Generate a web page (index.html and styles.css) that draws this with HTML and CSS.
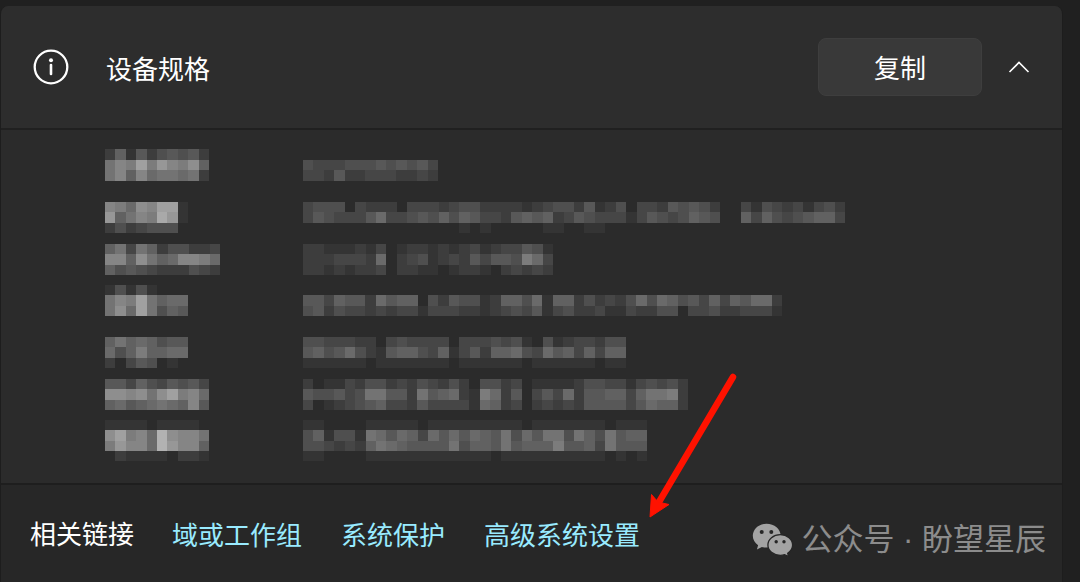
FILE: index.html
```
<!DOCTYPE html>
<html lang="zh-CN">
  <head>
    <meta charset="UTF-8" />
    <meta name="viewport" content="width=device-width, initial-scale=1.0" />
    <title>设备规格</title>
    <link rel="stylesheet" href="styles.css">
  </head>
  <body>
    <main class="card">
      <header class="card-header">
        <svg class="info-icon" viewBox="0 0 36 36" aria-hidden="true">
          <circle cx="18" cy="18" r="16.3" fill="none" stroke="#fff" stroke-width="2.3" />
          <circle cx="18" cy="11.2" r="2" fill="#fff" />
          <path d="M18 16v9" stroke="#fff" stroke-width="2.6" stroke-linecap="round" />
        </svg>
        <h1 class="card-title">设备规格</h1>
        <button class="copy-button" type="button">复制</button>
        <button class="toggle-button" type="button" aria-label="折叠">
          <svg class="chevron" viewBox="0 0 22 12" aria-hidden="true">
            <path d="M1.5 11 11 1.5l9.5 9.5" fill="none" stroke="#fff" stroke-width="1.6" />
          </svg>
        </button>
      </header>

      <dl class="specs" id="specs"></dl>

      <footer class="related">
        <span class="related-title">相关链接</span>
        <nav class="related-links">
          <a href="#">域或工作组</a>
          <a href="#">系统保护</a>
          <a href="#">高级系统设置</a>
        </nav>
      </footer>
    </main>

    <svg class="arrow" viewBox="0 0 90 148" aria-hidden="true">
      <path d="M85 6 11 131" stroke="#ff1200" stroke-width="6.5" stroke-linecap="round" />
      <path d="M2 146 3.5 123.500 10 131l11 2.500z" fill="#ff1200" stroke="#ff1200" stroke-linejoin="round" />
    </svg>

    <div class="watermark">
      <svg class="wechat" viewBox="0 0 42 34" aria-hidden="true">
        <path d="M14.5.7C6.8.7.8 6 .8 12.800c0 3.900 2 7.200 5.300 9.500L4.900 26.400l5-2.500c1.500.4 3 .6 4.600.6 8 0 14.200-5.100 14.200-11.700S22.400.7 14.500.7z" fill="#a3a3a3" />
        <circle cx="9.7" cy="9" r="2" fill="#262626" />
        <circle cx="19.3" cy="9" r="2" fill="#262626" />
        <path d="M28.3 11.700c-7 0-12.400 4.500-12.400 10.300s5.400 10.300 12.400 10.300c1.500 0 3-.2 4.300-.6l4 2-.9-3.500c3-1.900 4.900-4.900 4.900-8.200 0-5.800-5.400-10.300-12.300-10.300z" fill="#a3a3a3" stroke="#262626" stroke-width="1.3" />
        <circle cx="24.2" cy="18.8" r="1.700" fill="#262626" />
        <circle cx="32" cy="18.8" r="1.700" fill="#262626" />
      </svg>
      <span>公众号 · 盼望星辰</span>
    </div>

    <script src="script.js"></script>
  </body>
</html>
```

FILE: styles.css
```
* {
  box-sizing: border-box;
}
body {
  display: flex;
  position: relative;
  min-height: 100vh;
  margin: 0;
  padding: 6px 17px 0 0;
  background-color: #202020;
  color: #fff;
  font-family: "Noto Sans CJK SC", sans-serif;
  font-size: 26px;
  line-height: 38px;
}
.card {
  display: flex;
  flex: 1;
  flex-direction: column;
  overflow: hidden;
  border: 1px solid #1d1d1d;
  border-top: none;
  border-bottom: none;
  border-radius: 8px 8px 0 0;
}

.card-header {
  display: flex;
  align-items: center;
  height: 122px;
  padding: 0 23px 0 32px;
  background-color: #2d2d2d;
}
.info-icon {
  width: 36px;
  height: 36px;
  margin-right: 37px;
}
.card-title {
  flex: 1;
  margin: 0;
  padding-top: 2px;
  font-size: 26px;
  font-weight: 400;
}
.copy-button {
  width: 164px;
  height: 58px;
  margin-right: 17px;
  border: 1px solid #3e3e3e;
  border-radius: 8px;
  background-color: #393939;
  color: #fff;
  font: inherit;
  cursor: pointer;
}
.toggle-button {
  display: flex;
  align-items: center;
  justify-content: center;
  width: 40px;
  height: 40px;
  padding: 0;
  border: none;
  background: none;
  cursor: pointer;
}
.chevron {
  width: 22px;
  height: 12px;
}

.specs {
  display: grid;
  grid-template-columns: 198px 1fr;
  margin: 0;
  padding: 19px 24px 22px 104px;
  border-top: 2px solid #202020;
  background-color: #2b2b2b;
}
.specs dt,
.specs dd {
  margin: 0;
}
.mosaic {
  display: block;
  shape-rendering: crispEdges;
}

.related {
  display: flex;
  flex: 1;
  align-items: flex-start;
  padding: 29px 29px 20px;
  border-top: 2px solid #1e1e1e;
  background-color: #272727;
}
.related-title {
  margin-right: 38px;
}
.related-links {
  display: flex;
  gap: 39px;
  padding-top: 1px;
}
.related-links a {
  color: #99ebff;
  text-decoration: none;
}

.arrow {
  position: absolute;
  top: 371px;
  left: 648px;
  width: 90px;
  height: 148px;
}
.watermark {
  display: flex;
  position: absolute;
  right: 34px;
  bottom: 20px;
  align-items: center;
  gap: 7px;
  color: #8c8c8c;
  font-family: "Liberation Sans", "Noto Sans CJK SC", sans-serif;
  font-size: 31px;
  line-height: 44px;
}
.wechat {
  width: 42px;
  height: 34px;
}
```

FILE: script.js
```
// One entry per spec row. Each string is a line of blocks,
// each hex digit a brightness step above the panel colour.
const specs = [
  {
    label: ["2615245452", "8a9d9ca9b6", "8a6a788782", ""],
    value: ["", "4333444545453", "3325223332232", ""],
  },
  {
    label: ["", "a97badd1", "c68a9ec1", "2423444"],
    value: [
      "",
      "3444032220333234422221234425124033254542003143231342",
      "3543335733454646533256562354333135434654006364345663",
      "00000000000000010100000110011",
    ],
  },
  {
    label: ["", "68386244223", "aa6b867aa97", "64543222432"],
    value: [
      "",
      "221112130122121231233541",
      "222333270234123253554973",
      "221212230221101221023232",
    ],
  },
  {
    label: ["", "1414100", "8a9d8677", "8b7d8465", ""],
    value: [
      "",
      "",
      "5536552756604254412664716624232474764536365772",
      "4524332323313332212343513422311322440334223331",
    ],
  },
  {
    label: ["", "68676455", "74696677", "20354010"],
    value: [
      "",
      "4433322034333303334341041233244",
      "5645742156643613526674375636366",
      "1111110111111101111110111111011",
    ],
  },
  {
    label: ["", "5536435453", "bbab8bd9a7", "67567876a5"],
    value: [
      "",
      "2011324423243242044230111124433134342",
      "5445348855285672197250353725566368892",
      "3012345633253333176230232325555357662",
    ],
  },
  {
    label: ["", "1111011110", "bd9a7fbaa8", "9caa7fcaa6", "0211110221"],
    value: [
      "",
      "110000111110111111111011111110111",
      "461441875763757576584758848648566",
      "443232687655558466585666955638555",
      "110000111111111111011111111110101",
    ],
  },
];

const SVG_NS = "http://www.w3.org/2000/svg";
const list = document.getElementById("specs");

function drawMosaic(lines, rows) {
  const cols = Math.max(...lines.map((line) => line.length));
  const svg = document.createElementNS(SVG_NS, "svg");
  svg.setAttribute("class", "mosaic");
  svg.setAttribute("aria-hidden", "true");
  svg.setAttribute("viewBox", `0 0 ${cols} ${rows}`);
  svg.setAttribute("preserveAspectRatio", "none");
  svg.setAttribute("width", Math.round((cols * 125) / 12));
  svg.setAttribute("height", rows === 5 ? 51 : 42);

  lines.forEach((line, y) => {
    [...line].forEach((digit, x) => {
      if (digit === "0") return;
      const grey = 43 + parseInt(digit, 16) * 9;
      const block = document.createElementNS(SVG_NS, "rect");
      block.setAttribute("x", x);
      block.setAttribute("y", y);
      block.setAttribute("width", 1);
      block.setAttribute("height", 1);
      block.setAttribute("fill", `rgb(${grey}, ${grey}, ${grey})`);
      svg.appendChild(block);
    });
  });
  return svg;
}

specs.forEach((spec) => {
  const rows = spec.label.length;
  const term = document.createElement("dt");
  const detail = document.createElement("dd");
  term.appendChild(drawMosaic(spec.label, rows));
  detail.appendChild(drawMosaic(spec.value, rows));
  list.append(term, detail);
});
```
